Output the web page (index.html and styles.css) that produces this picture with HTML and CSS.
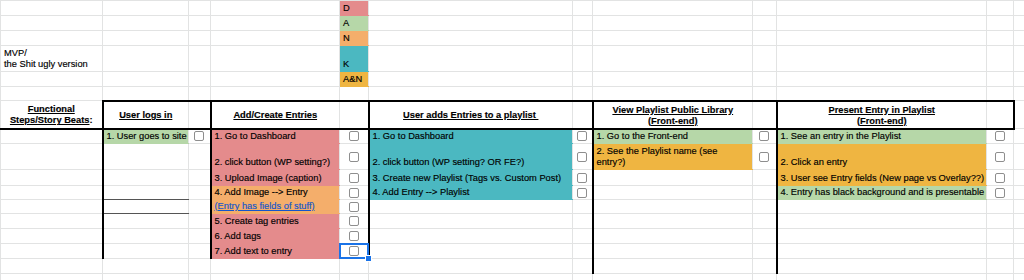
FILE: index.html
```html
<!DOCTYPE html>
<html>
<head>
<meta charset="utf-8">
<title>Sheet</title>
<link rel="stylesheet" href="styles.css">
</head>
<body>
<table class="sheet">
<colgroup>
<col class="w-a"><col class="w-b"><col class="w-c"><col class="w-d"><col class="w-e"><col class="w-f"><col class="w-g"><col class="w-h"><col class="w-i"><col class="w-j"><col class="w-k"><col class="w-l">
</colgroup>
<tbody>
<tr class="h15"><td></td><td></td><td></td><td></td><td class="red">D</td><td></td><td></td><td></td><td></td><td></td><td></td><td></td></tr>
<tr class="h15"><td></td><td></td><td></td><td></td><td class="green">A</td><td></td><td></td><td></td><td></td><td></td><td></td><td></td></tr>
<tr class="h15"><td></td><td></td><td></td><td></td><td class="orange">N</td><td></td><td></td><td></td><td></td><td></td><td></td><td></td></tr>
<tr class="h26"><td>MVP/<br>the Shit ugly version</td><td></td><td></td><td></td><td class="teal">K</td><td></td><td></td><td></td><td></td><td></td><td></td><td></td></tr>
<tr class="h15"><td></td><td></td><td></td><td></td><td class="yellow">A&amp;N</td><td></td><td></td><td></td><td></td><td></td><td></td><td></td></tr>
<tr class="h14"><td></td><td></td><td></td><td></td><td></td><td></td><td></td><td></td><td></td><td></td><td></td><td></td></tr>
<tr class="h28">
<td class="hd tb"><span class="ul">Functional</span><br><span class="ul">Steps/Story Beats</span>:</td>
<td class="hd tt tb tl"><span class="ul">User logs in</span></td>
<td class="tt tb"></td>
<td class="hd tt tb tl"><span class="ul">Add/Create Entries</span></td>
<td class="tt tb"></td>
<td class="hd tt tb tl"><span class="ul">User adds Entries to a playlist&nbsp;</span></td>
<td class="tt tb"></td>
<td class="hd tt tb tl"><span class="ul">View Playlist Public Library</span><br><span class="ul">(Front-end)</span></td>
<td class="tt tb"></td>
<td class="hd tt tb tl"><span class="ul">Present Entry in Playlist</span><br><span class="ul">(Front-end)</span></td>
<td class="tt tb"></td>
<td class="tl"></td>
</tr>
<tr class="h15">
<td></td>
<td class="green tl">1. User goes to site</td><td class="ck"><span class="cb"></span></td>
<td class="red tl">1. Go to Dashboard</td><td class="ck"><span class="cb"></span></td>
<td class="teal tl">1. Go to Dashboard</td><td class="ck"><span class="cb"></span></td>
<td class="green tl">1. Go to the Front-end</td><td class="ck"><span class="cb"></span></td>
<td class="green tl">1. See an entry in the Playlist</td><td class="ck"><span class="cb"></span></td>
<td></td>
</tr>
<tr class="h26">
<td></td>
<td class="tl"></td><td></td>
<td class="red tl">2. click button (WP setting?)</td><td class="ck"><span class="cb"></span></td>
<td class="teal tl">2. click button (WP setting? OR FE?)</td><td class="ck"><span class="cb"></span></td>
<td class="yellow tl">2. See the Playlist name (see<br>entry?)</td><td class="ck"><span class="cb"></span></td>
<td class="yellow tl">2. Click an entry</td><td class="ck"><span class="cb"></span></td>
<td></td>
</tr>
<tr class="h16">
<td></td>
<td class="tl"></td><td></td>
<td class="red tl">3. Upload Image (caption)</td><td class="ck"><span class="cb"></span></td>
<td class="teal tl">3. Create new Playlist (Tags vs. Custom Post)</td><td class="ck"><span class="cb"></span></td>
<td class="tl"></td><td></td>
<td class="yellow tl">3. User see Entry fields (New page vs Overlay??)</td><td class="ck"><span class="cb"></span></td>
<td></td>
</tr>
<tr class="h14">
<td></td>
<td class="tl dark-bottom"></td><td></td>
<td class="orange tl">4. Add Image --&gt; Entry</td><td class="ck"><span class="cb"></span></td>
<td class="teal tl">4. Add Entry --&gt; Playlist</td><td class="ck"><span class="cb"></span></td>
<td class="tl"></td><td></td>
<td class="green tl">4. Entry has black background and is presentable</td><td class="ck"><span class="cb"></span></td>
<td></td>
</tr>
<tr class="h14">
<td></td>
<td class="tl dark-bottom"></td><td></td>
<td class="orange tl"><span class="link">(Entry has fields of stuff)</span></td><td class="ck"><span class="cb"></span></td>
<td class="tl"></td><td></td>
<td class="tl"></td><td></td>
<td class="tl"></td><td></td>
<td></td>
</tr>
<tr class="h15">
<td></td>
<td class="tl"></td><td></td>
<td class="red tl">5. Create tag entries</td><td class="ck"><span class="cb"></span></td>
<td class="tl"></td><td></td>
<td class="tl"></td><td></td>
<td class="tl"></td><td></td>
<td></td>
</tr>
<tr class="h15">
<td></td>
<td class="tl"></td><td></td>
<td class="red tl">6. Add tags</td><td class="ck"><span class="cb"></span></td>
<td class="tl"></td><td></td>
<td class="tl"></td><td></td>
<td class="tl"></td><td></td>
<td></td>
</tr>
<tr class="h15">
<td></td>
<td class="tl"></td><td></td>
<td class="red tl">7. Add text to entry</td><td class="ck sel"><span class="cb"></span><span class="selbox"></span><span class="handle"></span></td>
<td class="tl"></td><td></td>
<td class="tl"></td><td></td>
<td class="tl"></td><td></td>
<td></td>
</tr>
<tr class="h15">
<td></td><td></td><td></td><td></td><td></td><td></td><td></td>
<td class="tl"></td><td></td>
<td class="tl"></td><td></td>
<td></td>
</tr>
<tr class="h15">
<td></td><td></td><td></td><td></td><td></td><td></td><td></td><td></td><td></td><td></td><td></td><td></td>
</tr>
</tbody>
</table>
</body>
</html>
```

FILE: styles.css
```css
html, body {
  margin: 0;
  padding: 0;
  background: #fff;
  overflow: hidden;
}

.sheet {
  border-collapse: collapse;
  table-layout: fixed;
  width: 1024px;
  font-family: "Liberation Sans", Arial, sans-serif;
  font-size: 9.3px;
  line-height: 11px;
  color: #000;
  -webkit-text-stroke: 0.15px #000;
}

.w-a { width: 102px; }
.w-b { width: 86px; }
.w-c { width: 22px; }
.w-d { width: 129px; }
.w-e { width: 29px; }
.w-f { width: 204px; }
.w-g { width: 20px; }
.w-h { width: 160px; }
.w-i { width: 24px; }
.w-j { width: 210px; }
.w-k { width: 27px; }
.w-l { width: 11px; }

.h14 { height: 14px; }
.h15 { height: 15px; }
.h16 { height: 16px; }
.h26 { height: 26px; }
.h28 { height: 28px; }

.sheet td {
  border: 1px solid #e2e3e3;
  padding: 0 3px 1px;
  vertical-align: bottom;
  white-space: nowrap;
  overflow: hidden;
}

.red { background: #e48b8c; border-bottom-color: #e48b8c !important; }
.green { background: #b6d7a8; border-bottom-color: #b6d7a8 !important; }
.orange { background: #f4ae6b; border-bottom-color: #f4ae6b !important; }
.teal { background: #4bb8c1; border-bottom-color: #4bb8c1 !important; }
.yellow { background: #efb541; border-bottom-color: #efb541 !important; }

.sheet td.hd {
  font-weight: bold;
  text-align: center;
  vertical-align: middle;
  padding: 2px 2px 0;
}

.ul { text-decoration: underline; }

.sheet td.tl { border-left: 2px solid #000; }
.sheet td.tt { border-top: 2px solid #000; }
.sheet td.tb { border-bottom: 2px solid #000; }
.sheet td.dark-bottom { border-bottom: 1px solid #555; }

.link {
  color: #1155cc;
  -webkit-text-stroke: 0.15px #1155cc;
  text-decoration: underline;
}

.sheet td.ck {
  padding: 0;
  text-align: center;
  vertical-align: middle;
  line-height: 0;
}

.cb {
  display: inline-block;
  width: 8px;
  height: 8px;
  border: 1.5px solid #8e8e8e;
  border-radius: 2px;
  background: #fff;
}

.sheet td.sel {
  position: relative;
  overflow: visible;
}

.selbox {
  position: absolute;
  left: -1px;
  top: -1px;
  right: -1px;
  bottom: -1px;
  border: 2px solid #1a73e8;
}

.handle {
  position: absolute;
  right: -4px;
  bottom: -4px;
  width: 5px;
  height: 5px;
  background: #1a73e8;
  border: 1px solid #fff;
}
```
